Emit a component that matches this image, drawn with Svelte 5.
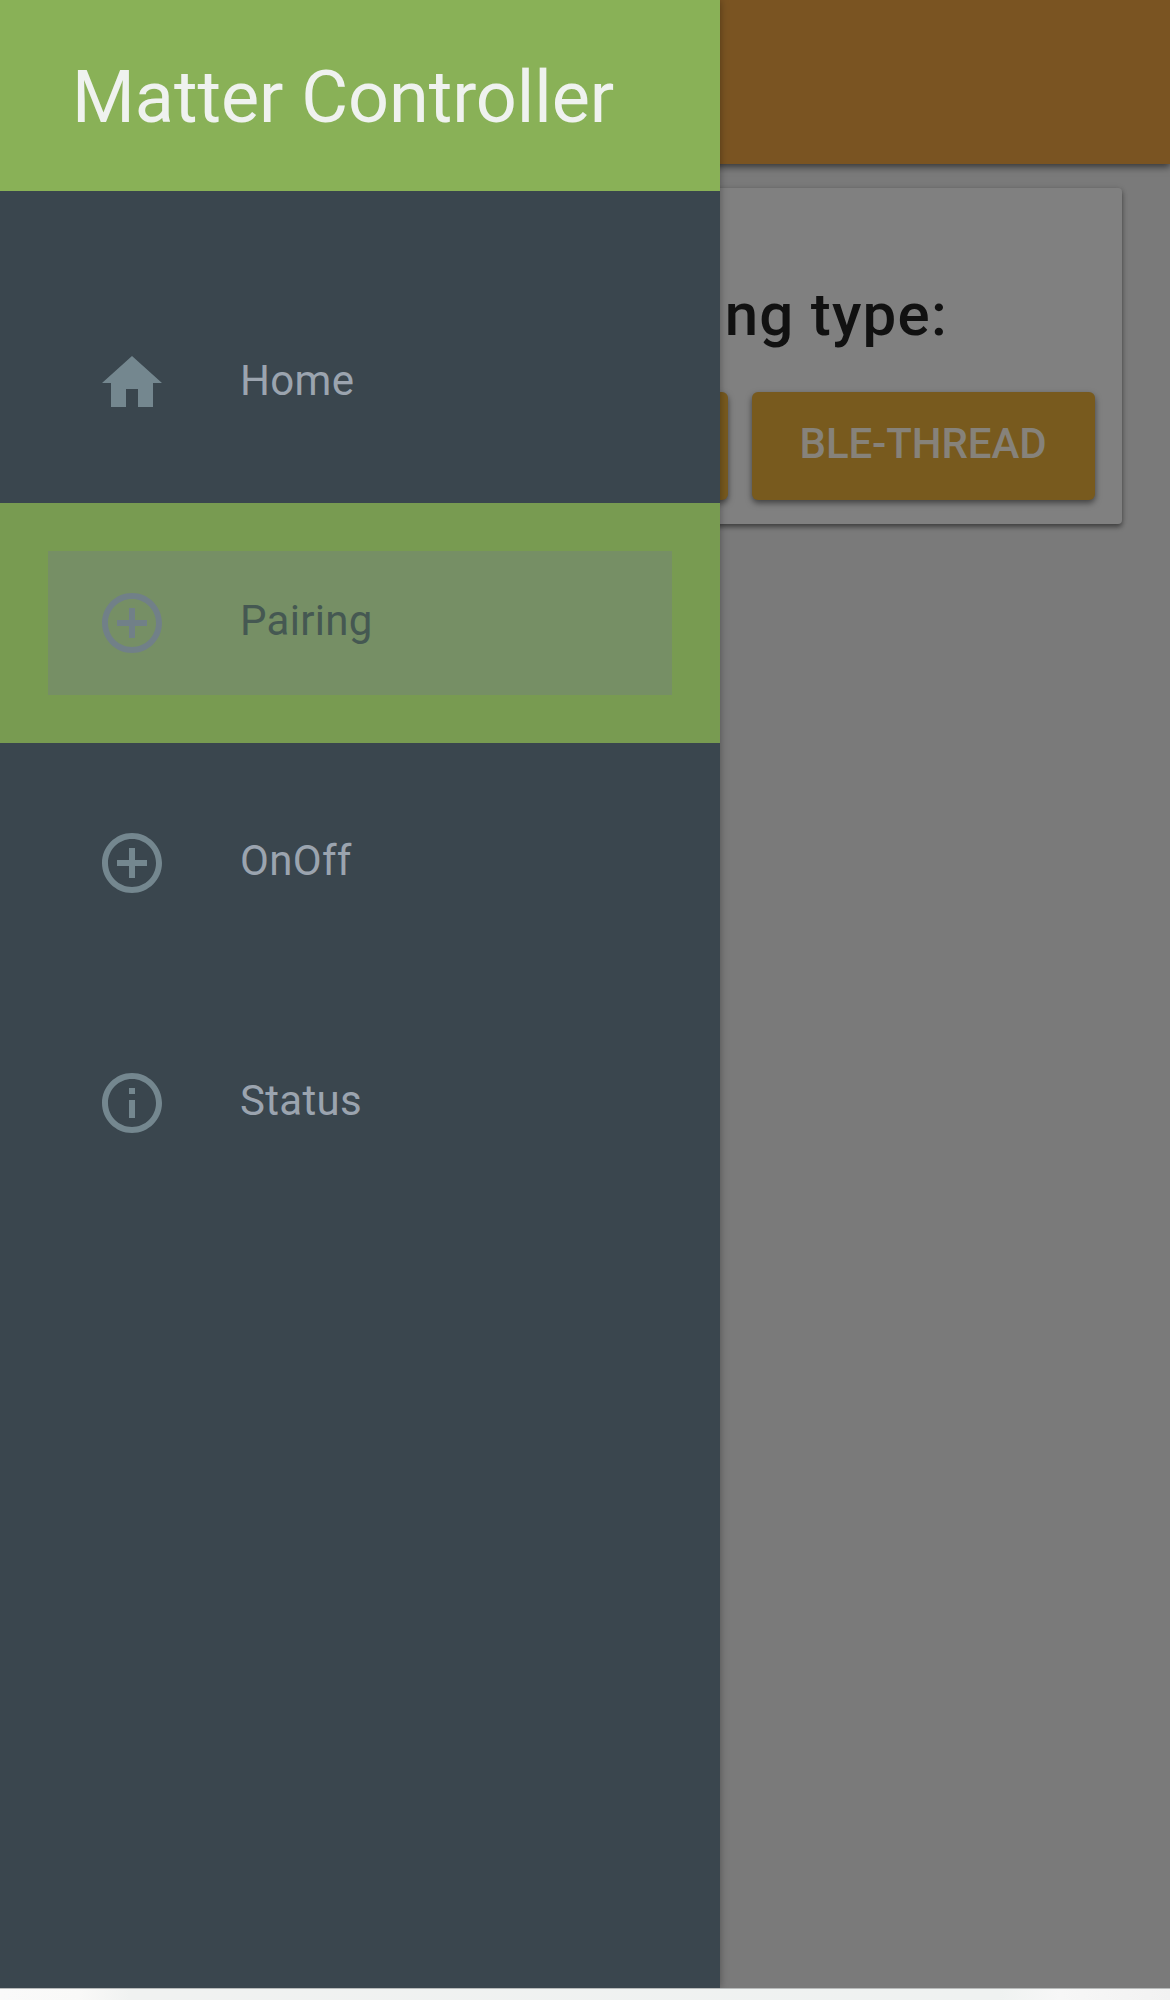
<script>
  const items = [
    { label: 'Home', icon: 'M10 20v-6h4v6h5v-8h3L12 3 2 12h3v8z' },
    {
      label: 'Pairing',
      active: true,
      icon: 'M13 7h-2v4H7v2h4v4h2v-4h4v-2h-4V7zm-1-5C6.48 2 2 6.48 2 12s4.48 10 10 10 10-4.48 10-10S17.52 2 12 2zm0 18c-4.41 0-8-3.59-8-8s3.59-8 8-8 8 3.59 8 8-3.59 8-8 8z'
    },
    {
      label: 'OnOff',
      icon: 'M13 7h-2v4H7v2h4v4h2v-4h4v-2h-4V7zm-1-5C6.48 2 2 6.48 2 12s4.48 10 10 10 10-4.48 10-10S17.52 2 12 2zm0 18c-4.41 0-8-3.59-8-8s3.59-8 8-8 8 3.59 8 8-3.59 8-8 8z'
    },
    {
      label: 'Status',
      icon: 'M11 7h2v2h-2zm0 4h2v6h-2zm1-9C6.48 2 2 6.48 2 12s4.48 10 10 10 10-4.48 10-10S17.52 2 12 2zm0 18c-4.41 0-8-3.59-8-8s3.59-8 8-8 8 3.59 8 8-3.59 8-8 8z'
    }
  ];
</script>

<div class="screen">
  <main class="page">
    <header class="appbar"></header>
    <section class="card">
      <h2>Pairing type:</h2>
      <div class="buttons">
        <span class="btn"></span>
        <span class="btn">BLE-THREAD</span>
      </div>
    </section>
  </main>

  <aside class="drawer">
    <header class="title"><h1>Matter Controller</h1></header>
    <nav>
      {#each items as item}
        <div class="row" class:active={item.active}>
          <div class="item">
            <svg viewBox="0 0 24 24"><path d={item.icon} /></svg>
            <span>{item.label}</span>
          </div>
        </div>
      {/each}
    </nav>
  </aside>

  <footer class="navbar"></footer>
</div>

<style>
  :global(body) {
    margin: 0;
  }
  .screen {
    position: relative;
    display: flex;
    flex-direction: column;
    width: 1170px;
    height: 2000px;
    overflow: hidden;
    font-family: Roboto, sans-serif;
  }
  .page {
    flex: 1;
    background: #7a7a7a;
  }
  .appbar {
    height: 164px;
    background: #7a5422;
    box-shadow: 0 3px 7px rgba(0, 0, 0, 0.55);
  }
  .card {
    box-sizing: border-box;
    height: 336px;
    margin: 24px 48px 0;
    padding: 92px 27px 0;
    border-radius: 4px;
    background: #808080;
    box-shadow: 0 3px 5px rgba(0, 0, 0, 0.45), 0 0 6px rgba(0, 0, 0, 0.1);
  }
  h2 {
    margin: 0 147px 0 0;
    font-size: 60px;
    line-height: 70px;
    font-weight: 500;
    letter-spacing: 1.25px;
    text-align: right;
    color: #111;
  }
  .buttons {
    display: flex;
    justify-content: flex-end;
    gap: 24px;
    margin-top: 42px;
  }
  .btn {
    box-sizing: border-box;
    width: 343px;
    height: 108px;
    padding-top: 1px;
    border-radius: 6px;
    background: #785a1e;
    box-shadow: 0 3px 6px rgba(0, 0, 0, 0.5);
    font-size: 42px;
    line-height: 102px;
    font-weight: 500;
    letter-spacing: -0.1px;
    text-align: center;
    text-indent: -1px;
    color: #86827a;
  }
  .drawer {
    position: absolute;
    top: 0;
    left: 0;
    width: 720px;
    height: 1988px;
    background: #3a464e;
    box-shadow: 0 0 8px rgba(0, 0, 0, 0.35);
    clip-path: inset(0 -20px 0 0);
  }
  .title {
    box-sizing: border-box;
    height: 191px;
    padding: 56px 0 0 72px;
    background: #89b157;
  }
  h1 {
    margin: 0;
    font-size: 72px;
    line-height: 84px;
    font-weight: 400;
    letter-spacing: -0.06px;
    color: #eff2ef;
  }
  nav {
    padding-top: 72px;
  }
  .row {
    box-sizing: border-box;
    height: 240px;
    padding: 48px;
  }
  .item {
    display: flex;
    align-items: center;
    height: 144px;
    padding-left: 48px;
    color: #9ba4af;
  }
  svg {
    width: 72px;
    height: 72px;
    fill: #74878f;
  }
  .item span {
    margin: -4px 0 0 72px;
    font-size: 42px;
    line-height: 50px;
    letter-spacing: 0.3px;
  }
  .active {
    background: #789b51;
  }
  .active .item {
    background: #768f65;
    color: #455852;
  }
  .active svg {
    fill: #718088;
  }
  .navbar {
    box-sizing: border-box;
    height: 12px;
    border-top: 1px solid #b8bbbb;
    background: linear-gradient(90deg, #fafafa 0, #f9f9f8 80px, #f0f2f1 130px, #eff2f1 1000px, #f7f7f7 1060px, #f2f2f2 1170px);
  }
</style>
